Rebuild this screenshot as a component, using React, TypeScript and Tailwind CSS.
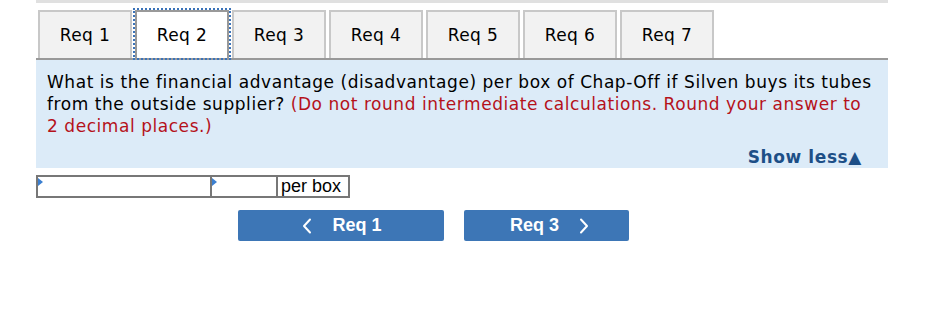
import React from "react"

const tabs = ["Req 1", "Req 2", "Req 3", "Req 4", "Req 5", "Req 6", "Req 7"]

const Chevron = ({ dir }: { dir: "left" | "right" }) => (
    <svg width="10" height="16" viewBox="0 0 10 16" className="block">
        <path
            d={dir === "left" ? "M8 1.5 L2 8 L8 14.5" : "M2 1.5 L8 8 L2 14.5"}
            fill="none"
            stroke="white"
            strokeWidth="2"
            strokeLinecap="round"
            strokeLinejoin="round"
        />
    </svg>
)

const InputCell = ({ className }: { className: string }) => (
    <div className={`relative h-[23px] border-2 border-[#777] bg-white ${className}`}>
        {/* little blue marker in the corner */}
        <div className="absolute left-0 top-[1px] h-0 w-0 border-y-[4px] border-l-[5px] border-y-transparent border-l-[#3b7fd0]" />
    </div>
)

const App = () => {
    return (
        <div className="h-[318px] w-[946px] bg-white" style={{ fontFamily: '"DejaVu Sans", Verdana, sans-serif' }}>
            <div className="ml-[36px] w-[852px]">
                {/* top rule */}
                <div className="h-[3px] bg-[#e0e0e0]" />

                {/* tabs */}
                <div className="mt-[7px] flex gap-[3px] pl-[2px]">
                    {tabs.map((t, i) =>
                        i === 1 ? (
                            <div
                                key={t}
                                className="flex h-[48px] w-[94px] items-center justify-center border-2 border-b-0 border-[#999] bg-white pt-[2px] text-[17px] tracking-[0.4px] text-black outline-2 outline-dotted outline-[#3b73b9]"
                            >
                                {t}
                            </div>
                        ) : (
                            <div
                                key={t}
                                className="flex h-[48px] w-[94px] items-center justify-center border-2 border-b-0 border-[#c8c8c8] bg-[#f2f2f2] pt-[2px] text-[17px] tracking-[0.4px] text-black"
                            >
                                {t}
                            </div>
                        )
                    )}
                </div>

                {/* question panel */}
                <div className="border-t-2 border-[#999] bg-[#dcebf8] pl-[11px] pr-[12px] pt-[11px]">
                    <p className="text-[17px] leading-[22px] tracking-[0.55px] text-black">
                        What is the financial advantage (disadvantage) per box of Chap-Off if Silven buys its tubes from the outside supplier?{" "}
                        <span className="text-[#b5121b]">(Do not round intermediate calculations. Round your answer to 2 decimal places.)</span>
                    </p>
                    <div className="mt-[10px] flex justify-end pr-[14px] text-[17px] font-bold leading-[21px] tracking-[0.6px] text-[#1d4f87]">
                        Show less▲
                    </div>
                </div>

                {/* answer row */}
                <div className="mt-[7px] flex">
                    <InputCell className="w-[176px]" />
                    <InputCell className="-ml-[2px] w-[68px]" />
                    <div
                        className="-ml-[2px] flex h-[23px] w-[74px] items-center border-2 border-[#777] bg-white pl-[3px] text-[18px] text-black"
                        style={{ fontFamily: '"Liberation Sans", Arial, sans-serif' }}
                    >
                        per box
                    </div>
                </div>

                {/* navigation */}
                <div
                    className="mt-[12px] flex gap-[20px] pl-[202px]"
                    style={{ fontFamily: '"Liberation Sans", Arial, sans-serif' }}
                >
                    <button className="flex h-[31px] w-[206px] items-center justify-center gap-[20px] rounded-[2px] bg-[#3d76b6] pl-[2px] text-[18px] font-bold text-white">
                        <Chevron dir="left" />
                        <span>Req 1</span>
                    </button>
                    <button className="flex h-[31px] w-[165px] items-center justify-center gap-[20px] rounded-[2px] bg-[#3d76b6] pl-[6px] text-[18px] font-bold text-white">
                        <span>Req 3</span>
                        <Chevron dir="right" />
                    </button>
                </div>
            </div>
        </div>
    )
}

export default App
